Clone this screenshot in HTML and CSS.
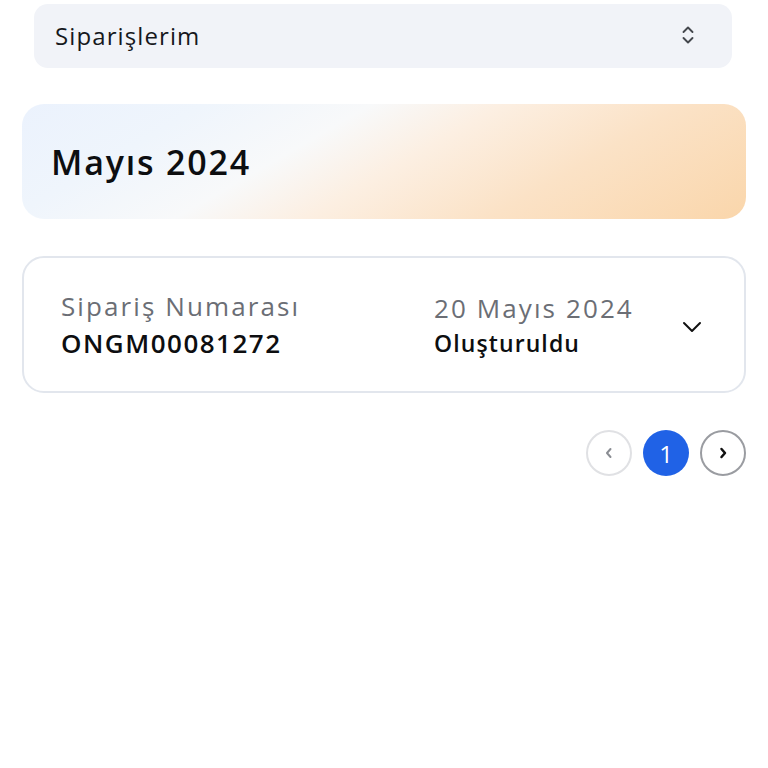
FILE: index.html
```html
<!DOCTYPE html>
<html lang="tr">
<head>
<meta charset="utf-8">
<link rel="stylesheet" href="styles.css">
</head>
<body>
<div class="page">
  <div class="select">
    <span class="select-label">Siparişlerim</span>
    <svg class="updown" width="14" height="22" viewBox="0 0 14 22" fill="none" stroke="#44474d" stroke-width="1.9" stroke-linecap="round" stroke-linejoin="round">
      <path d="M2.5 8 L7 3.5 L11.5 8"/>
      <path d="M2.5 14 L7 18.5 L11.5 14"/>
    </svg>
  </div>

  <div class="month">Mayıs 2024</div>

  <div class="order">
    <div class="col">
      <div class="muted">Sipariş Numarası</div>
      <div class="strong">ONGM00081272</div>
    </div>
    <div class="col col-right">
      <div class="muted">20 Mayıs 2024</div>
      <div class="status">Oluşturuldu</div>
    </div>
    <svg class="chev" width="20" height="12" viewBox="0 0 20 12" fill="none" stroke="#111" stroke-width="2" stroke-linecap="round" stroke-linejoin="round">
      <path d="M2 2 L10 10 L18 2"/>
    </svg>
  </div>

  <div class="pager">
    <div class="pg pg-prev">
      <svg width="10" height="14" viewBox="0 0 10 14" fill="none" stroke="#8a8d93" stroke-width="2" stroke-linecap="round" stroke-linejoin="round"><path d="M6.5 3 L3 7 L6.5 11"/></svg>
    </div>
    <div class="pg pg-active">1</div>
    <div class="pg pg-next">
      <svg width="10" height="14" viewBox="0 0 10 14" fill="none" stroke="#111" stroke-width="2.5" stroke-linecap="round" stroke-linejoin="round"><path d="M3.5 3 L7 7 L3.5 11"/></svg>
    </div>
  </div>
</div>
</body>
</html>
```

FILE: styles.css
```css
* { box-sizing: border-box; }
html, body { margin: 0; padding: 0; background: #fff; }
body {
  font-family: "Open Sans", "Noto Sans", sans-serif;
  color: #111;
}
.page {
  width: 768px;
  padding: 4px 22px 0 22px;
  display: flex;
  flex-direction: column;
}
.select {
  margin: 0 14px 0 12px;
  height: 64px;
  background: #f1f3f8;
  border-radius: 14px;
  display: flex;
  align-items: center;
  justify-content: space-between;
  padding: 0 37px 2px 21px;
}
.select-label {
  font-size: 24px;
  color: #16181c;
  letter-spacing: 1.1px;
}
.updown { display: block; }
.month {
  margin-top: 36px;
  height: 115px;
  border-radius: 22px;
  background: linear-gradient(150deg, #ebf2fd 0%, #eff5fc 20%, #f8f9fa 38%, #fcefe2 52%, #fbe2c6 72%, #fad6ab 100%);
  display: flex;
  align-items: center;
  padding: 0 29px 0;
  font-size: 34px;
  font-weight: 600;
  letter-spacing: 1.8px;
  color: #0d0e10;
}
.order {
  margin-top: 37px;
  height: 137px;
  border: 2px solid #e2e6ed;
  border-radius: 22px;
  display: flex;
  align-items: center;
  padding: 0 42px 0 37px;
}
.col {
  display: flex;
  flex-direction: column;
  gap: 1px;
}
.col-right { margin-left: auto; margin-right: 24px; width: 224px; }
.muted {
  font-size: 26px;
  color: #6b6e75;
  letter-spacing: 2.1px;
}
.strong {
  font-size: 26px;
  font-weight: 600;
  letter-spacing: 1.5px;
  color: #0d0e10;
}
.status {
  font-size: 23px;
  font-weight: 600;
  letter-spacing: 1.1px;
  color: #0d0e10;
}
.chev { display: block; margin-top: 4px; }
.pager {
  margin-top: 37px;
  display: flex;
  justify-content: flex-end;
  gap: 11px;
}
.pg {
  width: 46px;
  height: 46px;
  border-radius: 50%;
  display: flex;
  align-items: center;
  justify-content: center;
}
.pg-prev { border: 2px solid #e0e1e4; }
.pg-next { border: 2px solid #9a9ca1; }
.pg-active {
  background: #2062e6;
  color: #fff;
  font-size: 24px;
  font-weight: 400;
}
```
